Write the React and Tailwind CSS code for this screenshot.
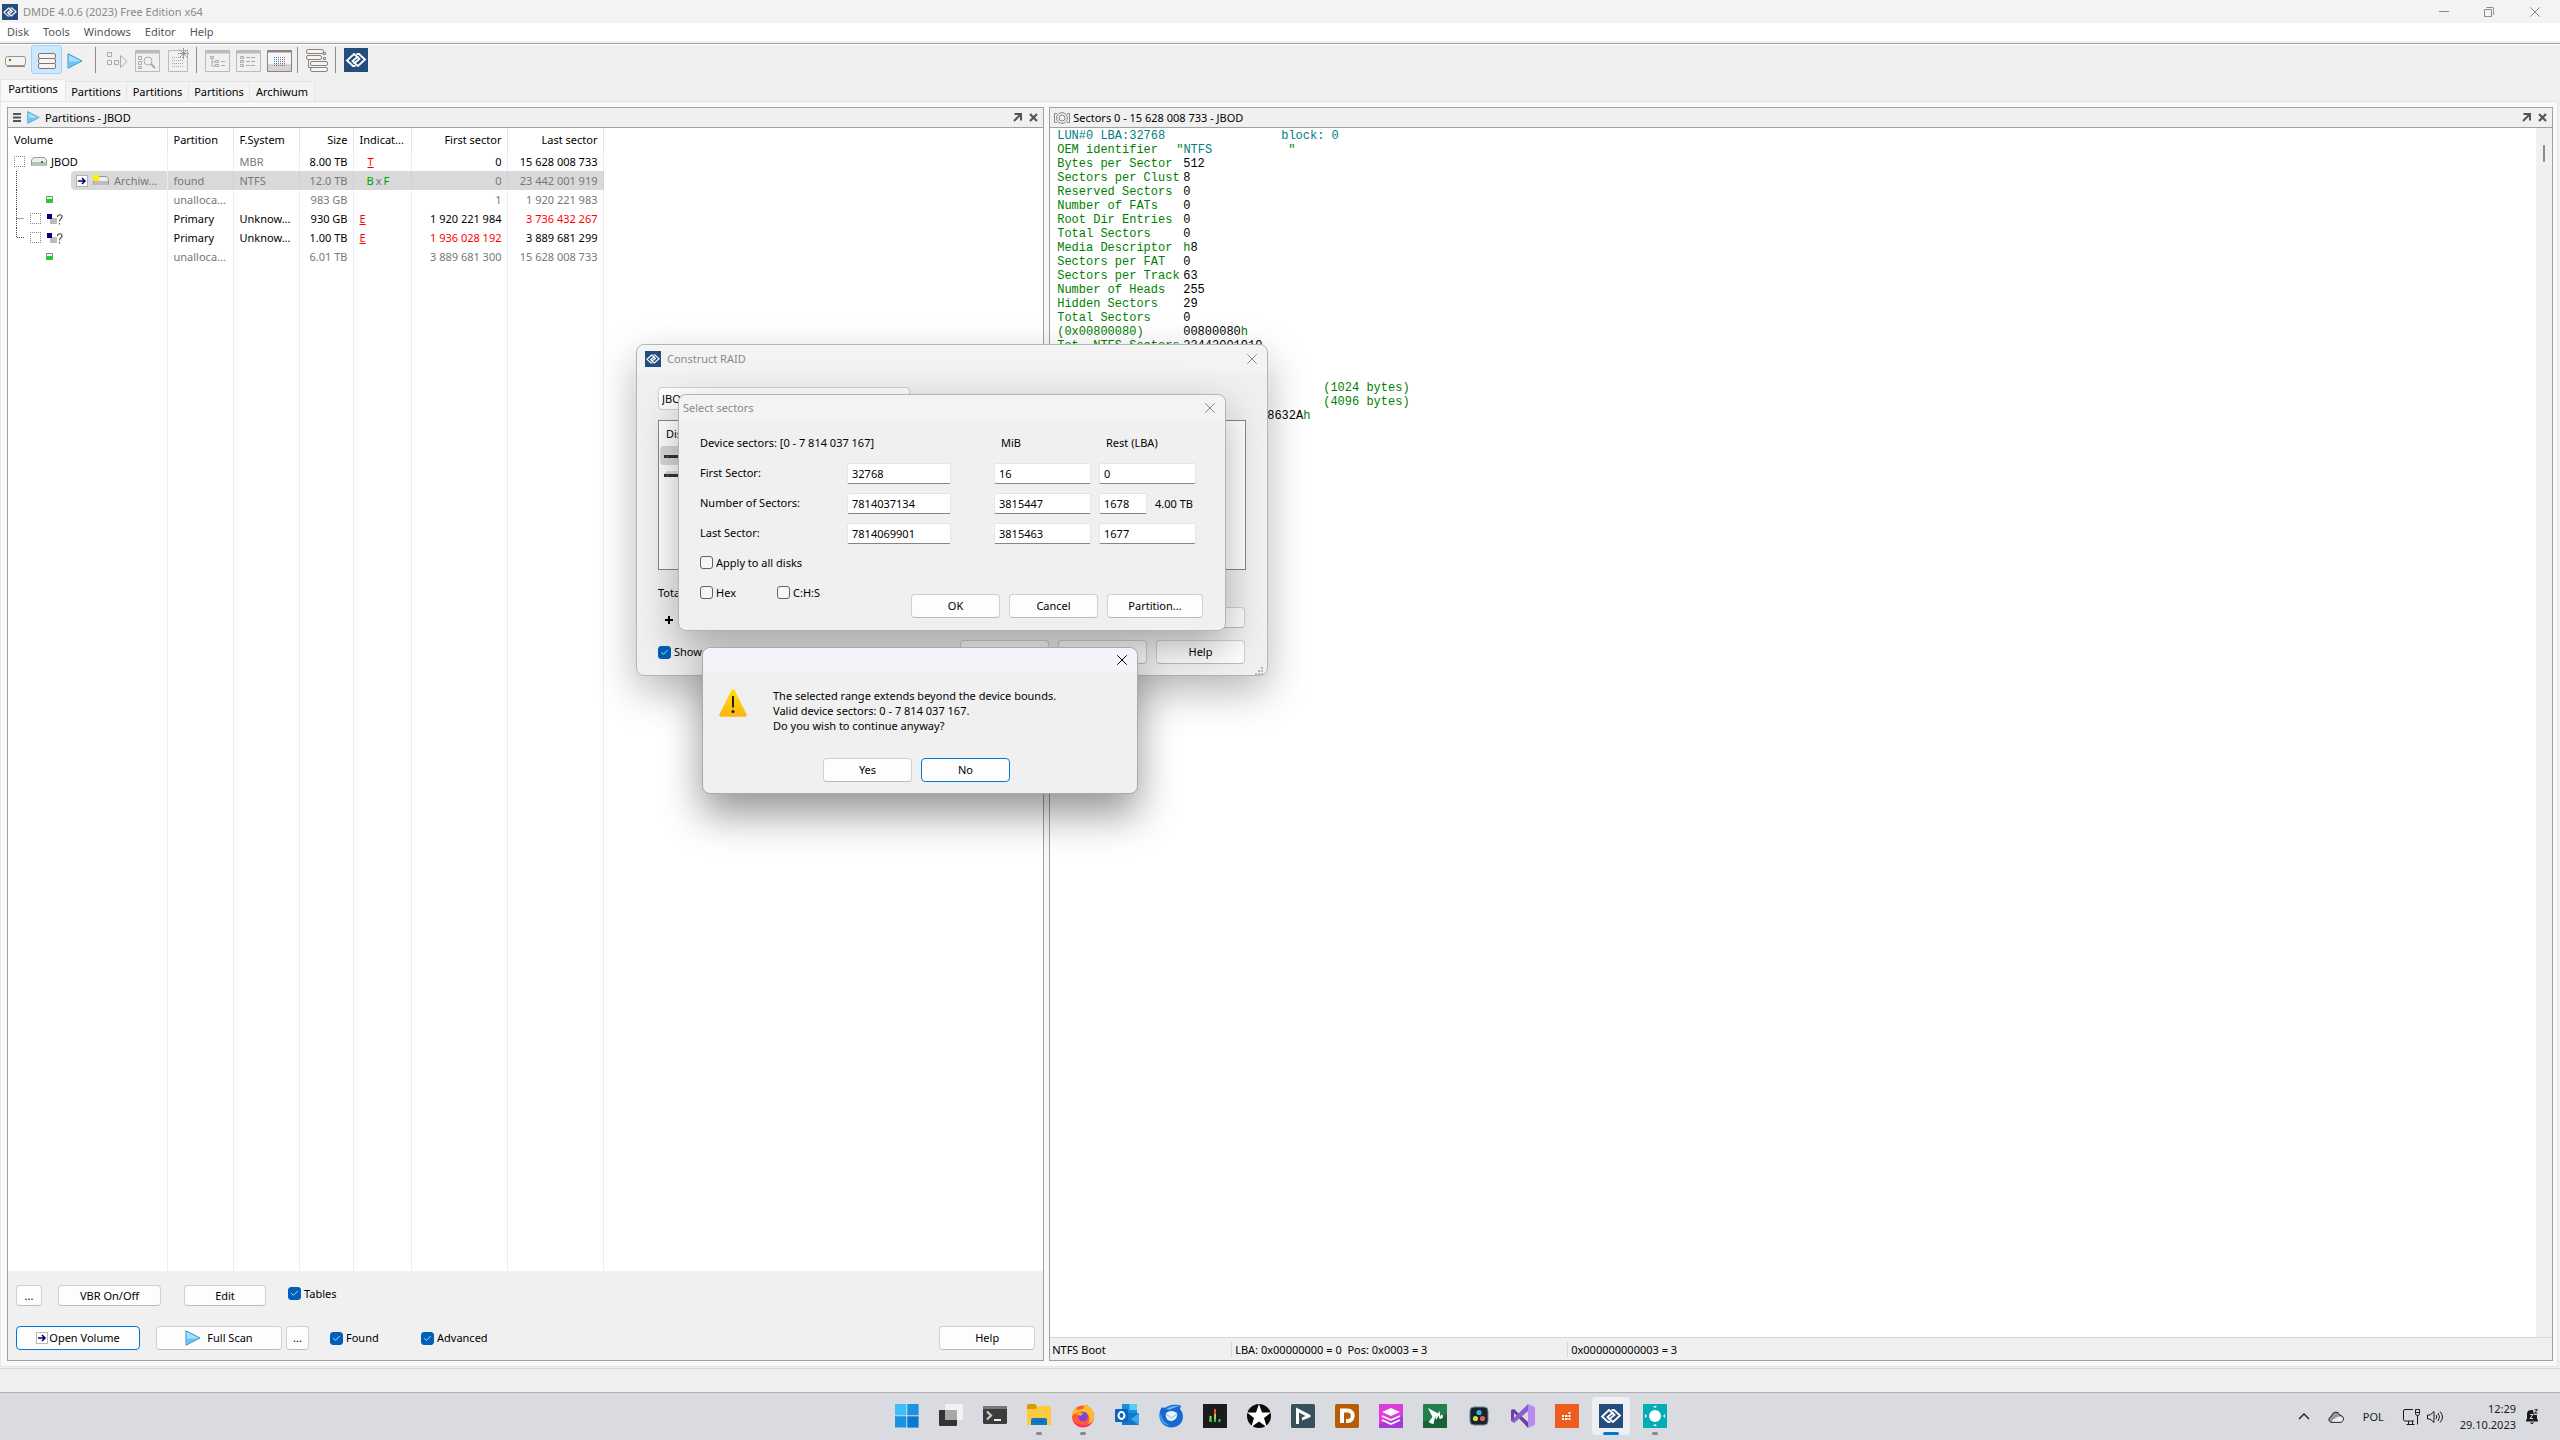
import { clsx } from "clsx";
import { Check } from "lucide-react";

const PARTITIONS = [
  {
    id: "jbod",
    kind: "disk",
    name: "JBOD",
    partition: "",
    fs: "MBR",
    size: "8.00 TB",
    first: "0",
    last: "15 628 008 733",
    mutedFs: true,
    flag: "T",
  },
  {
    id: "archiwum",
    kind: "found",
    name: "Archiw...",
    partition: "found",
    fs: "NTFS",
    size: "12.0 TB",
    first: "0",
    last: "23 442 001 919",
    muted: true,
    selected: true,
    flag: "BxF",
  },
  {
    id: "free1",
    kind: "free",
    partition: "unalloca...",
    fs: "",
    size: "983 GB",
    first: "1",
    last: "1 920 221 983",
    muted: true,
  },
  {
    id: "primary1",
    kind: "unknown",
    partition: "Primary",
    fs: "Unknow...",
    size: "930 GB",
    first: "1 920 221 984",
    last: "3 736 432 267",
    flag: "E",
    badLast: true,
  },
  {
    id: "primary2",
    kind: "unknown",
    end: true,
    partition: "Primary",
    fs: "Unknow...",
    size: "1.00 TB",
    first: "1 936 028 192",
    last: "3 889 681 299",
    flag: "E",
    badFirst: true,
  },
  {
    id: "free2",
    kind: "free",
    end: true,
    partition: "unalloca...",
    fs: "",
    size: "6.01 TB",
    first: "3 889 681 300",
    last: "15 628 008 733",
    muted: true,
  },
];

const BOOT_FIELDS = [
  ["Bytes per Sector", "512"],
  ["Sectors per Clust", "8"],
  ["Reserved Sectors", "0"],
  ["Number of FATs", "0"],
  ["Root Dir Entries", "0"],
  ["Total Sectors", "0"],
  ["Media Descriptor", "8", "h"],
  ["Sectors per FAT", "0"],
  ["Sectors per Track", "63"],
  ["Number of Heads", "255"],
  ["Hidden Sectors", "29"],
  ["Total Sectors", "0"],
  ["(0x00800080)", "00800080", "", "h"],
  ["Tot. NTFS Sectors", "23442001919"],
];

function Logo({ className }) {
  return (
    <svg viewBox="0 0 24 24" className={className}>
      <rect width="24" height="24" fill="#234d7c" />
      <g fill="none" stroke="#fff" strokeWidth="1.8">
        <path d="M11.500 18H9L3 12.500 10 6 13.500 9 8.500 13 11 15.500" />
        <path d="M12.500 6H15L21 11.500 14 18 10.500 15 15.500 11 13 8.500" />
      </g>
    </svg>
  );
}

function Play({ className }) {
  return (
    <svg viewBox="0 0 16 16" className={className}>
      <path d="M1 .8 15 8 1 15.200z" fill="#a9defa" stroke="#2a93d1" />
      <path d="M1.500 9 13 8 1.500 14.500z" fill="#6fc1f2" />
    </svg>
  );
}

function Close({ className }) {
  return (
    <svg viewBox="0 0 10 10" className={clsx("size-[10px]", className)}>
      <path d="M.3.3 9.700 9.700M9.700.3.3 9.700" stroke="currentColor" fill="none" />
    </svg>
  );
}

function Drive({ led = "#0a0", accent }) {
  return (
    <svg viewBox="0 0 16 11" className="h-[11px] w-4 shrink-0">
      <path d="M2.500 1.500h11l2 2.500v5.500h-15V4z" fill="#eee" stroke="#999" />
      <rect x="1" y="6" width="14" height="4" fill="#bdbdbd" />
      {accent ? <rect width="6" height="6" fill={accent} /> : <rect x="10" y="5" width="2" height="2" fill={led} />}
    </svg>
  );
}

function ArrowBox() {
  return (
    <svg viewBox="0 0 12 12" className="size-3 shrink-0">
      <rect x=".5" y=".5" width="11" height="11" fill="#fff" stroke="#777" strokeDasharray="1 1" />
      <path d="M2 6h6.500M6 3l3 3-3 3" fill="none" stroke="#000080" strokeWidth="1.500" />
    </svg>
  );
}

// dotted connector between the disk and its partitions
function TreeLine({ kind, end }) {
  const paths = {
    disk: "",
    found: "M8.500 0V19",
    free: end ? "" : "M8.500 0V19",
    unknown: end ? "M8.500 0V9.500H16" : "M8.500 0V19M8.500 9.500H16",
  };
  return (
    <svg viewBox="0 0 16 19" className="h-[19px] w-4 shrink-0">
      <path d={paths[kind]} fill="none" stroke="#444" strokeDasharray="1 1" />
    </svg>
  );
}

function DottedBox({ label }) {
  return (
    <input
      type="checkbox"
      aria-label={label}
      className="size-[11px] shrink-0 appearance-none border border-dotted border-[#888] bg-white"
    />
  );
}

function VolumeCell({ row }) {
  if (row.kind === "disk") {
    return (
      <div className="flex h-[19px] items-center pl-1.5">
        <DottedBox label={row.name} />
        <span className="ml-1.5 flex items-center gap-1">
          <Drive />
          {row.name}
        </span>
      </div>
    );
  }
  return (
    <div className="flex h-[19px] items-center">
      <TreeLine kind={row.kind} end={row.end} />
      {row.kind === "found" && (
        <div className="ml-[47px] flex h-[19px] flex-1 items-center gap-[5px] rounded-l-sm bg-[#d9d9d9] pl-[5px]">
          <ArrowBox />
          <Drive accent="#ffee00" />
          {row.name}
        </div>
      )}
      {row.kind === "free" && (
        <svg viewBox="0 0 7 7" className="ml-[22px] size-[7px]">
          <rect x=".5" y=".5" width="6" height="6" fill="#dfffdf" stroke="#7a9a7a" />
          <rect x="1" y="3" width="5" height="3" fill="#00e010" />
        </svg>
      )}
      {row.kind === "unknown" && (
        <span className="ml-1.5 flex items-center gap-1.5">
          <DottedBox label={row.partition} />
          <svg viewBox="0 0 16 12" className="h-3 w-4">
            <rect x="3" y="5" width="7" height="6" fill="#bbb" />
            <rect y="1" width="5" height="5" fill="#000080" />
            <path d="M10.500 4c0-3 4.500-3 4.500 0 0 2-2.500 1.500-2.500 4.500M12.500 10v1.500" fill="none" stroke="#555" strokeWidth="1.200" />
          </svg>
        </span>
      )}
    </div>
  );
}

function Flag({ value }) {
  if (value === "BxF") {
    return (
      <span className="pl-[7px] text-[#00a000]">
        B<span className="px-0.5 text-gray-500">x</span>F
      </span>
    );
  }
  return <span className={clsx("text-[#f00] underline", value === "T" && "ml-2")}>{value}</span>;
}

function PartitionTable() {
  return (
    <table className="h-full w-[595px] table-fixed border-collapse">
      <colgroup>
        <col className="w-[159px]" />
        <col className="w-[66px]" />
        <col className="w-[66px]" />
        <col className="w-[54px]" />
        <col className="w-[58px]" />
        <col className="w-[96px]" />
        <col className="w-[96px]" />
      </colgroup>
      <thead>
        <tr className="h-6 text-left [&>th]:border-r [&>th]:border-[#e5e5e5] [&>th]:pr-[5px] [&>th]:pl-1.5 [&>th]:font-normal">
          <th>Volume</th>
          <th>Partition</th>
          <th>F.System</th>
          <th className="text-right">Size</th>
          <th>Indicat...</th>
          <th className="text-right">First sector</th>
          <th className="text-right">Last sector</th>
        </tr>
      </thead>
      <tbody>
        {PARTITIONS.map((row) => (
          <tr
            key={row.id}
            className={clsx(
              "h-[19px] whitespace-nowrap [&>td]:border-r [&>td]:border-[#e3eefa] [&>td]:pr-[5px] [&>td]:pl-1.5",
              row.muted && "text-[#777]",
              row.selected && "[&>td+td]:border-[#c9d4e0] [&>td+td]:bg-[#d9d9d9]"
            )}
          >
            <td className="!p-0">
              <VolumeCell row={row} />
            </td>
            <td>{row.partition}</td>
            <td className={clsx(row.mutedFs && "text-[#777]")}>{row.fs}</td>
            <td className="text-right">{row.size}</td>
            <td>{row.flag && <Flag value={row.flag} />}</td>
            <td className={clsx("text-right", row.badFirst && "text-[#f00]")}>{row.first}</td>
            <td className={clsx("text-right", row.badLast && "text-[#f00]")}>{row.last}</td>
          </tr>
        ))}
        <tr className="[&>td]:border-r [&>td]:border-[#e3eefa]">
          <td />
          <td />
          <td />
          <td />
          <td />
          <td />
          <td />
        </tr>
      </tbody>
    </table>
  );
}

function Btn({ className, primary, children }) {
  return (
    <button
      type="button"
      className={clsx(
        "flex h-6 items-center justify-center rounded border bg-[#fdfdfd]",
        primary ? "border-[#0078d4]" : "border-[#d0d0d0] border-b-[#bbb]",
        className
      )}
    >
      {children}
    </button>
  );
}

function CheckBox({ label, checked, className }) {
  return (
    <label className={clsx("flex items-center gap-[3px]", className)}>
      <span className="grid size-[13px]">
        <input
          type="checkbox"
          defaultChecked={checked}
          className="peer size-[13px] appearance-none rounded-[3px] border border-[#626262] bg-[#f6f6f6] [grid-area:1/1] checked:border-[#005fb8] checked:bg-[#005fb8]"
        />
        <Check className="pointer-events-none invisible m-auto size-[9px] text-white [grid-area:1/1] peer-checked:visible" />
      </span>
      {label}
    </label>
  );
}

function PanelHeader({ icon, title }) {
  return (
    <header className="flex h-5 shrink-0 items-center border-b border-[#a0a0a0] bg-[#f0f0f0] pr-[5px] pl-[4px]">
      {icon}
      <h2 className="flex-1">{title}</h2>
      <button type="button" aria-label="Detach panel" className="mr-[7px] text-[#555]">
        <svg viewBox="0 0 9 9" className="size-[9px]">
          <path d="M1.500 1H8v6.500M8 1 1 8" fill="none" stroke="currentColor" strokeWidth="2" />
        </svg>
      </button>
      <button type="button" aria-label="Close panel" className="text-[#555]">
        <svg viewBox="0 0 9 9" className="size-[9px]">
          <path d="m1 1 7 7M8 1 1 8" fill="none" stroke="currentColor" strokeWidth="2.200" />
        </svg>
      </button>
    </header>
  );
}

function ToolButton({ label, className, children }) {
  return (
    <button type="button" aria-label={label} className={clsx("flex h-[29px] items-center justify-center", className)}>
      {children}
    </button>
  );
}

function Separator({ className }) {
  return <div className={clsx("h-[26px] w-px bg-[#8c8c8c]", className)} />;
}

function Toolbar() {
  return (
    <div className="flex h-[34px] items-start bg-[#f0f0f0] pl-[5px]">
      <ToolButton label="Select disk" className="pt-[3px]">
        <svg viewBox="0 0 21 12" className="h-3 w-[21px]">
          <rect x=".5" y="1.500" width="20" height="9" rx="2" fill="#f6f3f1" stroke="#9a9390" />
          <path d="M2 11.500h18" stroke="#8a8380" />
          <rect x="4" y="4" width="2" height="2" fill="#00a000" />
        </svg>
      </ToolButton>
      <ToolButton label="Partitions" className="ml-[5px] w-[31px] rounded-[3px] border border-[#99d1ff] bg-[#cce8ff] pt-0.5">
        <svg viewBox="0 0 18 16" className="h-4 w-[18px]">
          <g fill="#f6f3f1" stroke="#7e7774">
            <rect x=".5" y=".5" width="17" height="5" rx="1.500" />
            <rect x=".5" y="5.500" width="17" height="5" rx="1.500" />
            <rect x=".5" y="10.500" width="17" height="5" rx="1.500" />
          </g>
        </svg>
      </ToolButton>
      <ToolButton label="Full scan" className="ml-[5px] pt-0.5">
        <Play className="size-4" />
      </ToolButton>
      <Separator className="mt-[2px] ml-3" />
      <ToolButton label="Continue scan" className="ml-[11px]">
        <svg viewBox="0 0 21 16" className="h-4 w-[21px]">
          <path d="M.5.500h4v4h-4zM.5 8.500h4v4h-4zM7.500 8.500h4v4h-4zM13.500 3.500 20 9.500l-6.500 6z" fill="none" stroke="#aaa" />
        </svg>
      </ToolButton>
      <ToolButton label="Search" className="ml-[7px] pt-0.5">
        <svg viewBox="0 0 25 22" className="h-[22px] w-[25px]">
          <path d="M.5.500h24v21H.5z" fill="#f0f0f0" stroke="#bbb" />
          <path d="M1 2h23" stroke="#bbb" strokeWidth="3" />
          <g fill="none" stroke="#aaa">
            <path d="M3.500 6.500h3v3h-3zM3.500 11.500h3v3h-3zM3.500 16.500h3v2h-3z" />
            <circle cx="13" cy="11" r="4" />
            <path d="m16 14 4 4" strokeWidth="2" />
          </g>
        </svg>
      </ToolButton>
      <ToolButton label="New list" className="ml-2">
        <svg viewBox="0 0 22 24" className="h-6 w-[22px]">
          <path d="M.5 2.500h19v21H.5z" fill="#f0f0f0" stroke="#bbb" />
          <path d="M4 9.500h11M4 12.500h11M4 15.500h11M4 18.500h11" stroke="#aaa" strokeDasharray="1 1" />
          <path d="M15.500 0v11M10 5.500h11M11.500 1.500l8 8M19.500 1.500l-8 8" stroke="#999" />
        </svg>
      </ToolButton>
      <Separator className="mt-[2px] ml-[6px]" />
      <ToolButton label="Tree view" className="ml-2 pt-0.5">
        <svg viewBox="0 0 25 22" className="h-[22px] w-[25px]">
          <path d="M.5.500h24v21H.5z" fill="#f0f0f0" stroke="#bbb" />
          <path d="M1 2h23" stroke="#bbb" strokeWidth="3" />
          <path d="M5.500 6.500h3v2h-3zM7 9v7h3M7 12h3M10.500 10.500h3v2h-3zM10.500 14.500h3v2h-3zM16 11.500h4M16 15.500h4" fill="none" stroke="#aaa" />
        </svg>
      </ToolButton>
      <ToolButton label="List view" className="ml-[6px] pt-0.5">
        <svg viewBox="0 0 25 22" className="h-[22px] w-[25px]">
          <path d="M.5.500h24v21H.5z" fill="#f0f0f0" stroke="#bbb" />
          <path d="M1 2h23" stroke="#bbb" strokeWidth="3" />
          <path d="M4.500 6.500h3v2h-3zM4.500 10.500h3v2h-3zM4.500 14.500h3v2h-3zM10 7.500h4M15 7.500h4M10 11.500h4M15 11.500h4M10 15.500h4M15 15.500h4" fill="none" stroke="#aaa" />
        </svg>
      </ToolButton>
      <ToolButton label="Hex view" className="ml-[6px] pt-0.5">
        <svg viewBox="0 0 25 22" className="h-[22px] w-[25px]">
          <path d="M.5.500h24v21H.5z" fill="#f7f5f5" stroke="#8c8380" />
          <path d="M1 14h23v7H1z" fill="#d8d3d2" />
          <path d="M1 1.500h23" stroke="#8c8380" strokeWidth="2" />
          <path d="M7 7.500h11M7 9.500h11M7 11.500h11M7 13.500h11M7 15.500h11" stroke="#778" strokeDasharray="1 1" />
          <path d="M7.500 7v9M9.500 7v9" stroke="#1b8cc4" strokeDasharray="1 1" />
        </svg>
      </ToolButton>
      <Separator className="mt-[2px] ml-[5px]" />
      <ToolButton label="Construct RAID" className="ml-2 pt-0.5">
        <svg viewBox="0 0 23 23" className="h-[23px] w-[23px]">
          <g fill="none" stroke="#8a8380">
            <path d="M17.500 5.500h2.500M2.500 10.500v8h3M17.500 9h2.500" />
            <rect x=".5" y=".5" width="17" height="4" rx="1.500" fill="#f6f3f1" />
            <rect x=".5" y="6.500" width="15" height="4" rx="1.500" fill="#f6f3f1" />
            <rect x="4.500" y="12.500" width="17" height="4" rx="1.500" fill="#f6f3f1" />
            <rect x="4.500" y="18.500" width="17" height="4" rx="1.500" fill="#f6f3f1" />
            <path d="M17.500 3.500h2v2h-2zM17.500 8.500h2v2h-2z" fill="#f6f3f1" />
          </g>
        </svg>
      </ToolButton>
      <Separator className="mt-[2px] ml-[6px]" />
      <ToolButton label="About" className="ml-2">
        <Logo className="size-6" />
      </ToolButton>
    </div>
  );
}

function TitleBar() {
  return (
    <div className="flex h-[23px] items-center bg-[#f3f3f3] pl-[2px] text-[#8a8a8a]">
      <Logo className="size-4" />
      <h1 className="ml-[5px] flex-1">DMDE 4.0.6 (2023) Free Edition x64</h1>
      <button type="button" aria-label="Minimize" className="mr-[35px]">
        <svg viewBox="0 0 10 10" className="size-[10px]">
          <path d="M0 4.500h10" stroke="currentColor" />
        </svg>
      </button>
      <button type="button" aria-label="Restore" className="mr-9">
        <svg viewBox="0 0 10 10" className="size-[10px]">
          <path d="M.5 2.500h7v7h-7zM2.500.5h5.500q1 0 1.500.5T9.500 8" fill="none" stroke="currentColor" />
        </svg>
      </button>
      <button type="button" aria-label="Close" className="mr-[20px]">
        <Close />
      </button>
    </div>
  );
}

function PartitionsPanel() {
  return (
    <section className="flex min-w-0 flex-[1036] flex-col border border-[#a0a0a0] bg-white">
      <PanelHeader
        icon={
          <>
            <svg viewBox="0 0 8 9" className="mr-[6px] ml-px h-[9px] w-2">
              <path d="M0 1h8M0 4.500h8M0 8h8" stroke="#555" strokeWidth="1.800" />
            </svg>
            <Play className="mr-[5px] size-[13px]" />
          </>
        }
        title="Partitions - JBOD"
      />
      <div className="grid flex-1 justify-start">
        <PartitionTable />
      </div>
      <footer className="flex flex-col gap-5 bg-[#f0f0f0] px-2 pt-3.5 pb-2.5">
        <div className="flex h-[21px] items-center">
          <Btn className="h-[21px] w-[26px]">...</Btn>
          <Btn className="ml-4 h-[21px] w-[103px]">VBR On/Off</Btn>
          <Btn className="ml-[23px] h-[21px] w-[82px]">Edit</Btn>
          <CheckBox label="Tables" checked className="ml-[22px] h-[17px] self-start" />
        </div>
        <div className="flex items-center">
          <Btn primary className="w-[124px] gap-px">
            <ArrowBox />
            Open Volume
          </Btn>
          <Btn className="ml-4 w-[126px] gap-1.5">
            <Play className="size-4" />
            Full Scan
          </Btn>
          <Btn className="ml-1 w-[23px]">...</Btn>
          <CheckBox label="Found" checked className="ml-[21px] w-[50px]" />
          <CheckBox label="Advanced" checked className="ml-[41px]" />
          <Btn className="ml-auto w-24">Help</Btn>
        </div>
      </footer>
    </section>
  );
}

function SectorsPanel() {
  return (
    <section className="flex min-w-0 flex-[1503] flex-col border border-[#a0a0a0] bg-white">
      <PanelHeader
        icon={
          <svg viewBox="0 0 16 12" className="mr-[3px] h-3 w-4" fill="none" stroke="#888">
            <path d="M3 1.500H.5v9H3M13 1.500h2.500v9H13" />
            <circle cx="8" cy="6" r="5.400" />
            <circle cx="8" cy="6" r="3" />
          </svg>
        }
        title="Sectors 0 - 15 628 008 733 - JBOD"
      />
      <div className="flex flex-1">
        <div className="flex-1 pt-px pl-[7px] font-['Liberation_Mono',monospace] text-[12px] leading-[14px] whitespace-pre text-[#008000]">
          <div className="grid grid-cols-[224px_1fr] text-[#008080]">
            <span>LUN#0 LBA:32768</span>
            <span>block: 0</span>
          </div>
          <div className="grid grid-cols-[119px_112px_1fr]">
            <span>OEM identifier</span>
            <span>
              "<span className="text-[#008080]">NTFS</span>
            </span>
            <span>"</span>
          </div>
          {BOOT_FIELDS.map(([name, value, prefix, suffix], i) => (
            <div key={i} className="grid grid-cols-[126px_1fr]">
              <span>{name}</span>
              <span>
                {prefix}
                <span className="text-black">{value}</span>
                {suffix}
              </span>
            </div>
          ))}
          <div className="flex flex-col pt-7 pl-[266px]">
            <span>(1024 bytes)</span>
            <span>(4096 bytes)</span>
          </div>
          <div className="pl-[210px]">
            <span className="text-black">8632A</span>h
          </div>
        </div>
        <div className="w-4 bg-[#f0f0f0] pt-[17px]">
          <div className="mx-auto h-[17px] w-0.5 rounded-full bg-[#8a8a8a]" />
        </div>
      </div>
      <footer className="grid h-[23px] grid-cols-[181px_336px_1fr] items-center border-t border-[#d7d7d7] bg-[#f0f0f0] pt-px">
        <span className="pl-0.5">NTFS Boot</span>
        <span className="border-l border-[#d7d7d7] pl-[3px] whitespace-pre">LBA: 0x00000000 = 0  Pos: 0x0003 = 3</span>
        <span className="border-l border-[#d7d7d7] pl-[3px]">0x000000000003 = 3</span>
      </footer>
    </section>
  );
}

function RaidDialog() {
  return (
    <div
      role="dialog"
      aria-label="Construct RAID"
      className="absolute top-[344px] left-[636px] flex h-[332px] w-[632px] flex-col rounded-lg border border-[#b4b4b4] bg-[#f0f0f0] shadow-[0_16px_40px_rgba(0,0,0,0.28)]"
    >
      <div className="flex h-[29px] items-center rounded-t-lg bg-[#f3f3f3] pr-[10px] pl-2 text-[#8a8a8a]">
        <Logo className="size-4" />
        <h2 className="ml-1.5 flex-1">Construct RAID</h2>
        <button type="button" aria-label="Close">
          <Close />
        </button>
      </div>
      <div className="flex flex-1 flex-col pt-3.5 pr-[22px] pl-[21px]">
        <select
          aria-label="RAID type"
          className="h-[23px] w-[252px] appearance-none rounded-sm border border-[#d0d0d0] bg-[#fdfdfd] pl-[3px]"
        >
          <option>JBOD / Concatenated</option>
        </select>
        <div className="-mr-px mt-[10px] h-[150px] border border-[#828790] bg-white p-px">
          <div className="flex h-6 items-center pl-1.5">Disks</div>
          <div className="flex h-[19px] w-[480px] items-center rounded-sm bg-[#d9d9d9] pl-1">
            <DarkDrive />
          </div>
          <div className="flex h-[19px] items-center pl-1">
            <DarkDrive />
          </div>
        </div>
        <div className="flex h-[37px] items-end pb-1.5">Total</div>
        <div className="flex h-[21px] items-center">
          <button type="button" aria-label="Add disk" className="mt-1 ml-[7px]">
            <svg viewBox="0 0 8 8" className="size-2">
              <path d="M4 0v8M0 4h8" stroke="#000" strokeWidth="2" />
            </svg>
          </button>
          <Btn className="ml-auto h-[21px] w-[89px]" />
        </div>
        <div className="mt-3 flex items-center">
          <CheckBox label="Show" checked />
          <Btn className="ml-auto w-[89px]">OK</Btn>
          <Btn className="ml-[9px] w-[89px]">Cancel</Btn>
          <Btn className="ml-[9px] w-[89px]">Help</Btn>
        </div>
        <svg viewBox="0 0 8 8" className="mt-[3px] -mr-[18px] size-2 self-end" fill="#b5b5b5">
          <path d="M6 0h2v2H6zM3 3h2v2H3zM6 3h2v2H6zM0 6h2v2H0zM3 6h2v2H3zM6 6h2v2H6z" />
        </svg>
      </div>
    </div>
  );
}

function DarkDrive() {
  return (
    <svg viewBox="0 0 20 8" className="h-2 w-5">
      <path d="M3 0h14l3 3H0z" fill="#ddd" />
      <rect y="3" width="20" height="3" fill="#333" />
      <rect x="3" y="4" width="1" height="1" fill="#0f0" />
    </svg>
  );
}

const INPUT =
  "h-[21px] rounded-[2px] border border-[#e5e5e5] border-b-[#868686] bg-white px-1";

const SECTOR_ROWS = [
  { id: "first", label: "First Sector:", value: "32768", mib: "16", rest: "0" },
  { id: "count", label: "Number of Sectors:", value: "7814037134", mib: "3815447", rest: "1678", size: "4.00 TB" },
  { id: "last", label: "Last Sector:", value: "7814069901", mib: "3815463", rest: "1677" },
];

function SectorsDialog() {
  return (
    <div
      role="dialog"
      aria-label="Select sectors"
      className="absolute top-[394px] left-[678px] flex h-[237px] w-[548px] flex-col rounded-lg border border-[#b4b4b4] bg-[#f0f0f0] shadow-[0_16px_40px_rgba(0,0,0,0.3)]"
    >
      <div className="flex h-[25px] items-center rounded-t-lg bg-[#f3f3f3] pr-[10px] pl-1 text-[#8a8a8a]">
        <h2 className="flex-1">Select sectors</h2>
        <button type="button" aria-label="Close">
          <Close />
        </button>
      </div>
      <div className="flex flex-1 flex-col pr-[22px] pl-[21px]">
        <div className="grid h-[43px] grid-cols-[301px_105px_1fr] items-center pt-0.5">
          <span>Device sectors: [0 - 7 814 037 167]</span>
          <span>MiB</span>
          <span>Rest (LBA)</span>
        </div>
        {SECTOR_ROWS.map((row) => (
          <div key={row.id} className="grid h-[30px] grid-cols-[147px_104px_43px_97px_8px_1fr] items-start">
            <label htmlFor={row.id} className="flex h-[19px] items-center">
              {row.label}
            </label>
            <input id={row.id} defaultValue={row.value} className={INPUT} />
            <span />
            <input aria-label={`${row.label} MiB`} defaultValue={row.mib} className={INPUT} />
            <span />
            <span className="flex items-center gap-2">
              <input
                aria-label={`${row.label} rest`}
                defaultValue={row.rest}
                className={clsx(INPUT, row.size ? "w-12" : "w-[97px]")}
              />
              {row.size}
            </span>
          </div>
        ))}
        <CheckBox label="Apply to all disks" className="h-[19px] self-start" />
        <div className="mt-2.5 flex">
          <div className="flex h-[21px] items-center">
            <CheckBox label="Hex" className="w-[77px]" />
            <CheckBox label="C:H:S" />
          </div>
          <Btn className="mt-3 ml-auto w-[89px]">OK</Btn>
          <Btn className="mt-3 ml-[9px] w-[89px]">Cancel</Btn>
          <Btn className="mt-3 ml-[9px] w-24">Partition...</Btn>
        </div>
      </div>
    </div>
  );
}

function WarningDialog() {
  return (
    <div
      role="alertdialog"
      aria-label="Warning"
      className="absolute top-[647px] left-[702px] flex h-[147px] w-[436px] flex-col rounded-lg border border-[#aaa] bg-[#f0f0f0] shadow-[0_20px_40px_rgba(0,0,0,0.42)]"
    >
      <div className="flex h-6 items-center justify-end rounded-t-lg bg-[#f3f4fa] pr-[10px]">
        <button type="button" aria-label="Close">
          <Close />
        </button>
      </div>
      <div className="flex h-[86px] items-start pt-4 pl-4">
        <svg viewBox="0 0 28 28" className="mt-px size-7">
          <defs>
            <linearGradient id="warn" x1="0" y1="0" x2="0" y2="1">
              <stop offset="0" stopColor="#ffe000" />
              <stop offset="1" stopColor="#fcb414" />
            </linearGradient>
          </defs>
          <path d="M12.400 1.200q1.600-2 3.200 0L27.600 25.500q.6 2-1.500 2.300H1.900Q-.2 27.500.4 25.500z" fill="url(#warn)" />
          <path d="M14 7v11.500" stroke="#222" strokeWidth="2" />
          <circle cx="14" cy="22.500" r="1.600" fill="#222" />
        </svg>
        <p className="ml-[26px] leading-[15px]">
          The selected range extends beyond the device bounds.
          <br />
          Valid device sectors: 0 - 7 814 037 167.
          <br />
          Do you wish to continue anyway?
        </p>
      </div>
      <div className="flex gap-[9px] pl-[120px]">
        <Btn className="w-[89px]">Yes</Btn>
        <Btn primary className="w-[89px]">
          No
        </Btn>
      </div>
    </div>
  );
}

const APPS = [
  {
    name: "Start",
    art: (
      <g fill="#1a93e0">
        <path d="M0 0h11.300v11.300H0z" fill="#3fbdf5" />
        <path d="M12.300 0h11.300v11.300H12.300zM0 12.300h11.300v11.300H0z" />
        <path d="M12.300 12.300h11.300v11.300H12.300z" fill="#0a78d0" />
      </g>
    ),
  },
  {
    name: "Task view",
    art: (
      <>
        <rect y="6" width="18" height="16" rx="1" fill="#333" />
        <rect x="6" width="18" height="16" rx="1" fill="#f2f2f2" />
        <path d="M6 6h12v10H6z" fill="#a8a8a8" />
      </>
    ),
  },
  {
    name: "Terminal",
    art: (
      <>
        <rect y="2" width="24" height="18" rx="1.500" fill="#3c3c3c" />
        <path d="M0 5V3.500Q0 2 1.500 2h21Q24 2 24 3.500V5z" fill="#777" />
        <path d="m4 7.500 4 4-4 4" fill="none" stroke="#ccc" strokeWidth="2.200" />
        <path d="M11 16h7" stroke="#fff" strokeWidth="1.800" />
      </>
    ),
  },
  {
    name: "Explorer",
    running: true,
    art: (
      <>
        <path d="M0 1.500Q0 0 1.500 0H8l2 2.500V6H0z" fill="#d99a00" />
        <path d="M0 5h9l2-3h13v19H0z" fill="#fdcb3c" />
        <path d="M4 21v-5q0-2 2-2h12q2 0 2 2v5z" fill="#1178c8" />
        <path d="M7 17.500h9" stroke="#0a5fa5" />
      </>
    ),
  },
  {
    name: "Firefox",
    running: true,
    art: (
      <>
        <circle cx="12" cy="12.500" r="11" fill="#ff5a36" />
        <path d="M1 12C1 8 3 5 5 4l2 2c3-1 4-1 5-1 1-2 2-4 4-5 1 3 7 5 7 12 0 4-3 7-6 8 3-5 1-11-4-12S3 10 1 12z" fill="#ffbd2e" />
        <path d="M2 17c3 7 14 9 19 2-6 3-14 3-19-2z" fill="#ff2f6d" />
        <circle cx="12" cy="12.500" r="4.800" fill="#7b45d8" />
        <path d="M5 9c3-1 5-1 8 1-2 0-3 1-3 2-2 0-4-1-5-3z" fill="#ff9a28" />
      </>
    ),
  },
  {
    name: "Outlook",
    art: (
      <>
        <path d="M7 0h15v12H7z" fill="#1490df" />
        <path d="M14.500 0H22v6h-7.500z" fill="#50d0ff" />
        <path d="M7 9h17v12H7z" fill="#1078c8" />
        <path d="m7 9 17 12V9l-8 6z" fill="#35a8ee" />
        <rect y="5" width="13" height="13" rx="1" fill="#0a64c0" />
        <ellipse cx="6.500" cy="11.500" rx="3" ry="3.400" fill="none" stroke="#fff" strokeWidth="2" />
      </>
    ),
  },
  {
    name: "Thunderbird",
    art: (
      <>
        <path d="M3 3c1 2 4 0 7-1 4-2 11-1 12 0l-1 3c5 6 3 13-1 16-5 4-13 3-17-2C-1 14 0 7 3 3z" fill="#1769d2" />
        <path d="M7 5c4-3 9-4 14-3-4 1-8 2-10 4z" fill="#5eb8f5" />
        <path d="M2 8c0 6 3 11 9 13-5 1-10-3-10-8z" fill="#3d9cf0" />
        <path d="M7 9q5-4 11 0c1 4-2 8-6 8s-6-4-5-8z" fill="#e9f3ff" />
        <path d="m7 10 5.500 4L18 10" fill="none" stroke="#8ab8ea" />
      </>
    ),
  },
  {
    name: "Monitor",
    art: (
      <>
        <rect width="24" height="24" fill="#1b1b1b" />
        <path d="M7.500 18v-6" stroke="#c6c432" strokeWidth="2" />
        <path d="M12 18V5" stroke="#e5533d" strokeWidth="2" />
        <path d="M12 18v-8" stroke="#b8c83a" strokeWidth="2" />
        <path d="M16.500 18v-3M7.500 18v-3M12 18v-3" stroke="#20d060" strokeWidth="2" />
      </>
    ),
  },
  {
    name: "Star",
    art: (
      <>
        <circle cx="12" cy="12" r="12" fill="#0a0a0a" />
        <path d="m12 0 3 8.500h9l-7 5.500 2.700 9L12 17.500 4.300 23 7 14 0 8.500h9z" fill="#fff" />
      </>
    ),
  },
  {
    name: "Player",
    art: (
      <>
        <rect width="24" height="24" rx="1.500" fill="#37505c" />
        <path d="M5 3.500 19.500 11v2L11 16.500v-3l3.500-1.500L8 8.500V20H5z" fill="#fff" />
      </>
    ),
  },
  {
    name: "Packager",
    art: (
      <>
        <rect width="24" height="24" rx="2" fill="#b85c05" />
        <path d="M7 19V6.500h5.500c7 0 7 10.500 0 10.500H11" fill="none" stroke="#fff" strokeWidth="4" />
      </>
    ),
  },
  {
    name: "Layers",
    art: (
      <>
        <rect width="24" height="24" fill="#e03ade" />
        <path d="M0 24V20L24 12v12z" fill="#a63bd8" />
        <path d="m12 4 9 4-9 4-9-4z" fill="#fff" />
        <path d="m3 12 9 4 9-4M3 16l9 4 9-4" fill="none" stroke="#fff" strokeWidth="1.800" />
      </>
    ),
  },
  {
    name: "Wave",
    art: (
      <>
        <rect width="24" height="24" rx="1" fill="#23804c" />
        <path d="M0 24V18L24 10v14z" fill="#186238" />
        <path d="m5 4 12 6.500-5 3-1.500 6.500q-2 0-5-2l4-5z" fill="#fff" />
        <path d="m13 15 3-6 1 5h1l1-3v3" fill="none" stroke="#fff" strokeWidth="1.500" />
      </>
    ),
  },
  {
    name: "Resolve",
    art: (
      <>
        <rect x="3" y="3" width="18" height="18" rx="4" fill="#16242f" stroke="#6d8290" />
        <circle cx="12" cy="8.500" r="2.600" fill="#34b5e5" />
        <circle cx="8.500" cy="14.500" r="2.600" fill="#d9d93c" />
        <circle cx="15.500" cy="14.500" r="2.600" fill="#ef5a50" />
      </>
    ),
  },
  {
    name: "Visual Studio",
    art: (
      <>
        <path d="M17 0 24 3v18l-7 3z" fill="#b98af0" />
        <path d="M0 6l3-1 14 13v6L3 9v7l-3 1z" fill="#6a3fa8" />
        <path d="M0 17 17 0v7L3 19z" fill="#8a5cd0" />
      </>
    ),
  },
  {
    name: "Mixer",
    art: (
      <>
        <rect width="24" height="24" fill="#ee5c20" />
        <path d="M7 11h2v2H7zM10 11h2.500v2H10zM7 14h2v2H7zM10 14h2.500v2H10zM13.500 8h2v2h-2zM13.500 11h2v2h-2zM13.500 14h2v2h-2z" fill="#fff" />
      </>
    ),
  },
  { name: "DMDE", active: true },
  {
    name: "Ball",
    running: true,
    art: (
      <>
        <rect width="24" height="24" fill="#00aeb4" />
        <circle cx="12" cy="12" r="6" fill="#fff" />
        <path d="m12 4-2-2h4zM12 20l-2 2h4zM4 12l-2-2v4zM20 12l2-2v4z" fill="#fff" />
      </>
    ),
  },
];

function Taskbar() {
  return (
    <nav className="grid h-12 shrink-0 grid-cols-[1fr_auto_1fr] border-t border-[#b0b0b0] bg-[#dadbe0]">
      <div />
      <div className="flex pl-0.5">
        {APPS.map((app) => (
          <button
            key={app.name}
            type="button"
            aria-label={app.name}
            className="flex w-11 flex-col items-center pt-1"
          >
            <span
              className={clsx(
                "flex h-[38px] w-[38px] flex-col items-center justify-between rounded pt-[7px]",
                app.active && "bg-[#eeeff2]"
              )}
            >
              {app.art ? (
                <svg viewBox="0 0 24 24" className="size-6">
                  {app.art}
                </svg>
              ) : (
                <Logo className="size-6" />
              )}
              <span
                className={clsx(
                  "h-[3px] rounded-full",
                  app.active && "w-4 bg-[#0078d4]",
                  app.running && "w-1.5 bg-[#888]"
                )}
              />
            </span>
          </button>
        ))}
      </div>
      <div className="flex items-center justify-end pr-[21px] text-[#1a1a1a]">
        <svg viewBox="0 0 12 7" className="mr-[18px] h-[7px] w-3">
          <path d="m1 6 5-5 5 5" fill="none" stroke="currentColor" strokeWidth="1.300" />
        </svg>
        <svg viewBox="0 0 16 12" className="mr-[19px] h-3 w-4">
          <path d="M4 11.300C0 11.300 0 6 3.500 5.500 4 0 11 0 12 4.500c4.500 0 4.500 6.800 0 6.800z" fill="#999" stroke="currentColor" />
          <path d="M4 10.800C3 9 9 6 11 5.500c5-.5 5 5.300 1 5.300z" fill="#eee" />
        </svg>
        <span className="mr-[19px]">POL</span>
        <svg viewBox="0 0 17 16" className="mr-[7px] h-4 w-[17px]" fill="none" stroke="currentColor">
          <path d="M10 .5H2Q.5.500.5 2v8.500Q.5 12 2 12h9M5.500 12v3.500M9.500 12v3.500M3.500 15.500h8M14.500 6.500v9M12.500.500h4v4q0 2-2 2t-2-2zM12.500 3.500h4" />
        </svg>
        <svg viewBox="0 0 17 14" className="mr-4 h-3.5 w-[17px]" fill="none" stroke="currentColor">
          <path d="M.5 5v4H3l4 3.500v-11L3 5zM9 5q1.500 2 0 4M11 3q3 4 0 8M13 1.500q5 5.500 0 11" />
        </svg>
        <time className="mr-[9px] text-right leading-4">
          12:29
          <br />
          29.10.2023
        </time>
        <svg viewBox="0 0 14 16" className="h-4 w-3.5">
          <path d="M1 12.500V11l1-1V5q0-4 4.500-4L8 1l1 5h3v4l1 1v1.500zM5 13.500h4q-2 3-4 0z" fill="currentColor" />
          <path d="M5 5.500h3l-3 4h3" fill="none" stroke="#dadbe0" />
          <path d="M9.500.700h3l-3 3.500h3" fill="none" stroke="currentColor" />
        </svg>
      </div>
    </nav>
  );
}

export default function App() {
  return (
    <div className="relative flex h-screen flex-col overflow-hidden bg-[#f0f0f0] font-['Noto_Sans',sans-serif] text-[11px] leading-4 text-black">
      <TitleBar />
      <nav className="flex h-[18px] items-center gap-[14px] bg-white pl-[7px] text-[#555]">
        <a href="#disk">Disk</a>
        <a href="#tools">Tools</a>
        <a href="#windows">Windows</a>
        <a href="#editor">Editor</a>
        <a href="#help">Help</a>
      </nav>
      <div className="mt-0.5 h-0.5 border-t border-b border-t-[#a0a0a0] border-b-white" />
      <Toolbar />
      <div role="tablist" className="flex h-[22px] items-end">
        <button type="button" role="tab" className="h-[22px] w-[66px] border border-b-0 border-[#e5e5e5] bg-[#f9f9f9] pb-1">
          Partitions
        </button>
        <button type="button" role="tab" className="h-5 w-[61px] border-t border-r border-[#e5e5e5] bg-[#f3f3f3]">
          Partitions
        </button>
        <button type="button" role="tab" className="h-5 w-[62px] border-t border-r border-[#e5e5e5] bg-[#f3f3f3]">
          Partitions
        </button>
        <button type="button" role="tab" className="h-5 w-[61px] border-t border-r border-[#e5e5e5] bg-[#f3f3f3]">
          Partitions
        </button>
        <button type="button" role="tab" className="h-5 w-[65px] border-t border-r border-[#e5e5e5] bg-[#f3f3f3]">
          Archiwum
        </button>
      </div>
      <main className="mr-0.5 flex min-h-0 flex-1 gap-[5px] border border-[#e5e5e5] bg-[#f9f9f9] pt-[5px] pr-1 pb-[5px] pl-1.5">
        <PartitionsPanel />
        <SectorsPanel />
      </main>
      <div className="mt-px h-6 shrink-0 border-t border-[#d7d7d7]" />
      <Taskbar />
      <RaidDialog />
      <SectorsDialog />
      <WarningDialog />
    </div>
  );
}
